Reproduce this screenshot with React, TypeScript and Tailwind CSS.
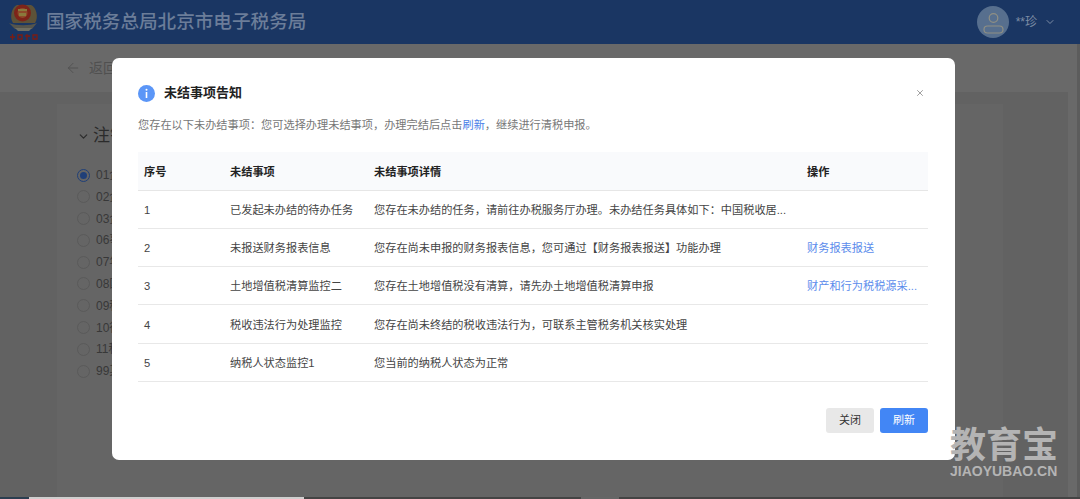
import React from "react";
import { ArrowLeft, ChevronDown, X } from "lucide-react";

const font = { fontFamily: '"Liberation Sans", "Noto Sans CJK SC", sans-serif' };

const options = ["01企业", "02企业", "03企业", "06事业", "07年度", "08国家", "09税务", "10行政", "11税务", "99其他"];

const rows = [
  { id: 1, name: "已发起未办结的待办任务", detail: "您存在未办结的任务，请前往办税服务厅办理。未办结任务具体如下：中国税收居...", action: "" },
  { id: 2, name: "未报送财务报表信息", detail: "您存在尚未申报的财务报表信息，您可通过【财务报表报送】功能办理", action: "财务报表报送" },
  { id: 3, name: "土地增值税清算监控二", detail: "您存在土地增值税没有清算，请先办土地增值税清算申报", action: "财产和行为税税源采..." },
  { id: 4, name: "税收违法行为处理监控", detail: "您存在尚未终结的税收违法行为，可联系主管税务机关核实处理", action: "" },
  { id: 5, name: "纳税人状态监控1", detail: "您当前的纳税人状态为正常", action: "" },
];

const Emblem = () => (
  <svg width="32" height="42" viewBox="0 0 32 42" className="shrink-0">
    <path d="M5 22 C1 16 4 6 9 4 L23 4 C28 6 31 16 27 22 Z" fill="#5d5238" />
    <circle cx="14.5" cy="12" r="8.5" fill="#7d2419" />
    <circle cx="14.5" cy="12" r="5" fill="#8f4a2a" />
    <path d="M10 8 h9 v2 h-9 Z M11 12 h7 v3 h-7 Z" fill="#8a7a3c" />
    <path d="M1 22 C8 25 22 25 29 22 L24 28 H7 Z" fill="#55554c" />
    <path d="M7 27 H24 L21 30 H10 Z" fill="#6e6e62" />
    <path d="M2 36 h5 M4.5 33 v6 M10 34 h4 v4 h-4 Z M17 35 h5 M19 33 v6 M25 34 h4 v4 h-4 Z" stroke="#7c1c14" strokeWidth="1.3" fill="none" />
  </svg>
);

const InfoDot = () => (
  <svg width="17" height="17" viewBox="0 0 17 17" className="shrink-0">
    <circle cx="8.5" cy="8.5" r="8.5" fill="#5b96f7" />
    <circle cx="8.5" cy="4.8" r="1" fill="#ffffff" />
    <rect x="7.7" y="7" width="1.6" height="6" fill="#ffffff" />
  </svg>
);

const Avatar = () => (
  <svg width="32" height="32" viewBox="0 0 32 32" className="shrink-0">
    <circle cx="16" cy="16" r="16" fill="#576f8e" />
    <circle cx="16.5" cy="12" r="4.3" fill="none" stroke="#8f8f84" strokeWidth="1.2" />
    <rect x="7" y="20" width="19" height="7" rx="3.5" fill="none" stroke="#8f8f84" strokeWidth="1.2" />
  </svg>
);

export default function App() {
  return (
    <div className="relative w-[1080px] h-[499px] overflow-hidden bg-[#696969]" style={font}>
      <header className="h-[44px] bg-[#1a3663] flex items-center pl-2 pr-[24px]">
        <Emblem />
        <span className="ml-[6px] text-[18.6px] font-medium text-[#6b7d99] whitespace-nowrap">国家税务总局北京市电子税务局</span>
        <div className="ml-auto flex items-center">
          <Avatar />
          <span className="ml-[7px] text-[12px] text-[#7d8da5]">**珍</span>
          <ChevronDown size={12} className="ml-[7px] text-[#7d8da5]" />
        </div>
      </header>

      <div className="h-[48px] pl-[65px] flex items-center gap-[8px] text-[#505050]">
        <ArrowLeft size={16} strokeWidth={1.3} />
        <span className="text-[14px]">返回</span>
      </div>

      <main className="w-[1068px] h-[407px] bg-[#626262] pt-[12px] pl-[57px]">
        <section className="w-[946px] h-[395px] bg-[#656565] pl-[20px] pt-[20px]">
          <div className="h-[24px] flex items-center text-[#2b2b2b]">
            <ChevronDown size={13} strokeWidth={2.2} />
            <span className="ml-[3px] text-[17px]">注销原因</span>
          </div>
          <ul className="mt-[18px] flex flex-col gap-[3.8px]">
            {options.map((opt, i) => (
              <li key={opt} className="h-[18px] flex items-center gap-[6px] text-[12px] text-[#383838]">
                {i === 0 ? (
                  <span className="w-[13px] h-[13px] rounded-full border border-[#1f3f78] flex items-center justify-center">
                    <span className="w-[7px] h-[7px] rounded-full bg-[#1f3f78]" />
                  </span>
                ) : (
                  <span className="w-[13px] h-[13px] rounded-full border border-[#5a5a5a]" />
                )}
                {opt}
              </li>
            ))}
          </ul>
        </section>
      </main>

      <div className="absolute right-0 top-[44px] bottom-0 w-[3px] bg-[#5c5c5c]" />

      {/* modal */}
      <div className="absolute left-[112px] top-[58px] w-[843px] h-[402px] bg-white rounded-[7px] pl-[26px] pr-[27px] pt-[26px]">
        <div className="flex items-center h-[18px]">
          <InfoDot />
          <span className="ml-[9px] text-[13px] font-bold text-[#222]">未结事项告知</span>
          <X size={10} strokeWidth={1.5} className="ml-auto mr-[3px] text-[#666]" />
        </div>
        <p className="mt-[15px] text-[11.2px] leading-[16px] text-[#777]">
          您存在以下未办结事项：您可选择办理未结事项，办理完结后点击<span className="text-[#4a80e8]">刷新</span>，继续进行清税申报。
        </p>
        <table className="mt-[19px] w-[790px] table-fixed border-collapse text-[11.2px] text-[#444]">
          <colgroup>
            <col className="w-[86px]" />
            <col className="w-[144px]" />
            <col className="w-[433px]" />
            <col className="w-[127px]" />
          </colgroup>
          <thead>
            <tr className="h-[38px] bg-[#f9fafc] border-b border-[#e6e6e6] text-left text-[#222]">
              <th className="px-[6px] pt-[3px] font-bold">序号</th>
              <th className="px-[6px] pt-[3px] font-bold">未结事项</th>
              <th className="px-[6px] pt-[3px] font-bold">未结事项详情</th>
              <th className="px-[6px] pt-[3px] font-bold">操作</th>
            </tr>
          </thead>
          <tbody>
            {rows.map((r) => (
              <tr key={r.id} className="h-[38.3px] border-b border-[#e8e8e8]">
                <td className="px-[6px] pt-[2px]">{r.id}</td>
                <td className="px-[6px] pt-[2px]">{r.name}</td>
                <td className="px-[6px] pt-[2px]">{r.detail}</td>
                <td className="px-[6px] pt-[2px] text-[#5b8cec]">{r.action}</td>
              </tr>
            ))}
          </tbody>
        </table>
        <div className="mt-[26px] flex justify-end gap-[6px]">
          <button className="w-[48px] h-[25px] rounded-[3px] bg-[#e8e8e8] text-[11px] text-[#333]">关闭</button>
          <button className="w-[48px] h-[25px] rounded-[3px] bg-[#4286f5] text-[11px] text-white">刷新</button>
        </div>
      </div>

      {/* watermark */}
      <div className="absolute left-[950px] top-[428px] text-[#b4b4b4] font-bold">
        <div className="text-[36px] leading-[36px] whitespace-nowrap">教育宝</div>
        <div className="text-[14px] leading-[14px] whitespace-nowrap">JIAOYUBAO.CN</div>
      </div>

      {/* task bar strip at the cut edge of the capture */}
      <div className="absolute left-0 bottom-0 h-[2px] w-full flex bg-[#444444]">
        <div className="w-[29px] bg-[#2c3e50]" />
        <div className="w-[275px] bg-[#cfcfcf]" />
        <div className="w-[277px]" />
        <div className="w-[38px] bg-[#666666]" />
      </div>
    </div>
  );
}
